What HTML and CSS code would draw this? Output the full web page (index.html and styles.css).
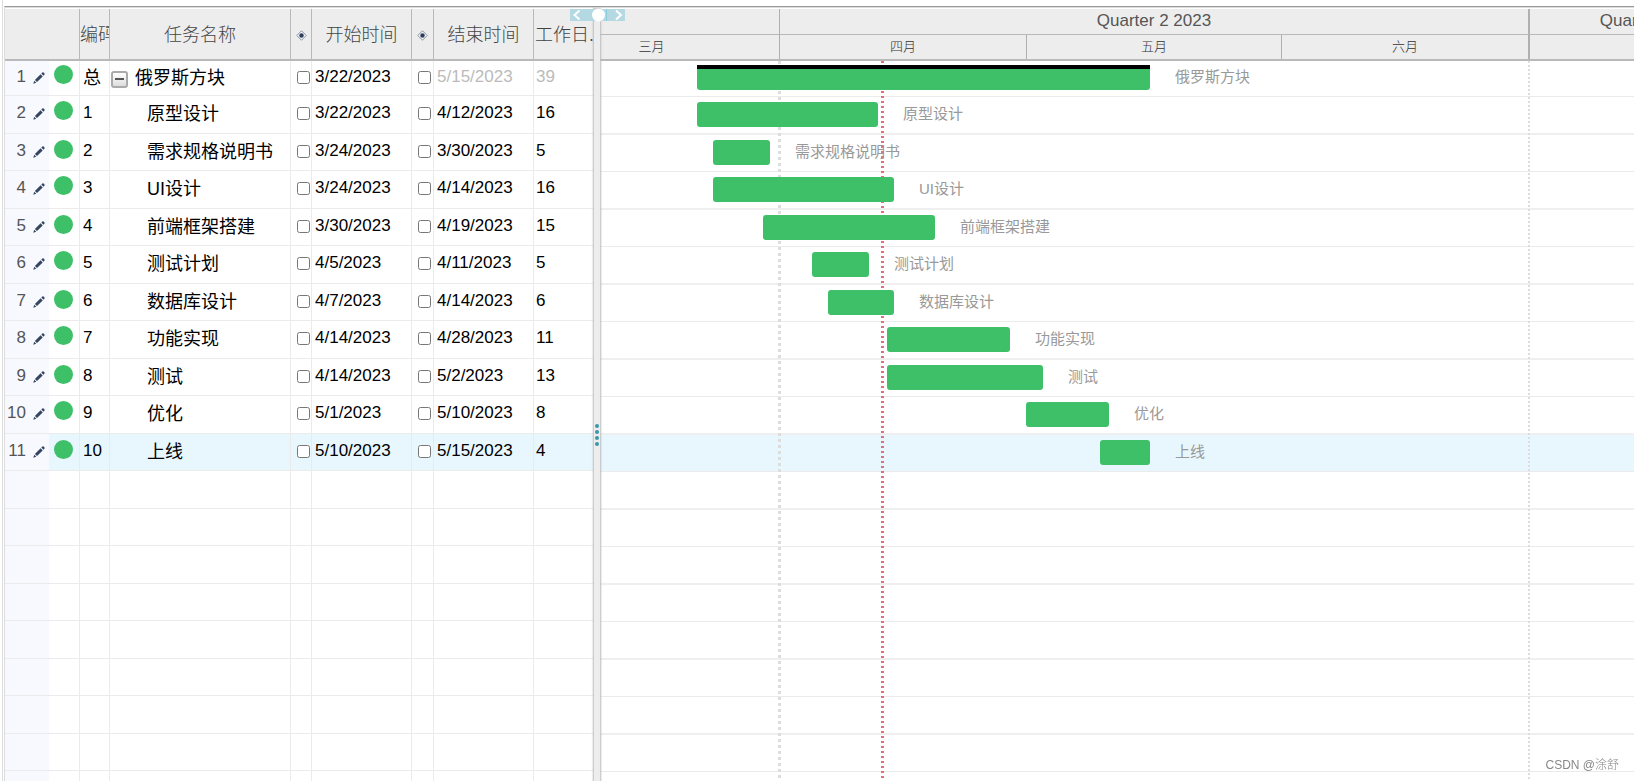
FILE: index.html
```html
<!DOCTYPE html>
<html lang="zh-CN">
<head>
<meta charset="utf-8">
<title>俄罗斯方块</title>
<link rel="stylesheet" href="styles.css">
</head>
<body>
<svg class="symbols" aria-hidden="true">
  <symbol id="pencil" viewBox="0 0 12 12"><path d="M0.3 11.7 1.2 8.7 3.3 10.8ZM1.9 8 7.6 2.3 9.7 4.4 4 10.1ZM8.3 1.6 9.4 0.5Q10 0 10.6 0.5L11.5 1.4Q12 2 11.5 2.6L10.4 3.7Z" fill="#34455f"/></symbol>
  <symbol id="diamond" viewBox="0 0 11 11"><path d="M5.5 0.8 10.2 5.5 5.5 10.2 0.8 5.5Z" fill="#f4f6f9" stroke="#8791a0"/><circle cx="5.5" cy="5.5" r="2.2" fill="#2d3e58"/></symbol>
</svg>
<main class="gantt">
  <section class="sheet">
    <table class="grid">
      <colgroup><col class="c-num"><col class="c-dot"><col class="c-code"><col class="c-name"><col class="c-lock"><col class="c-date"><col class="c-lock2"><col class="c-date"><col class="c-days"></colgroup>
      <thead>
        <tr><th class="plain"></th><th></th><th class="cut">编码</th><th>任务名称</th><th><svg class="diamond"><use href="#diamond"/></svg></th><th>开始时间</th><th><svg class="diamond"><use href="#diamond"/></svg></th><th>结束时间</th><th class="cut last">工作日...</th></tr>
      </thead>
      <tbody>
        <tr><td class="num"><span>1</span><svg class="pencil"><use href="#pencil"/></svg></td><td><i class="dot"></i></td><td class="cjk">总</td><td class="name root"><button class="toggle" type="button" aria-label="折叠"></button>俄罗斯方块</td><td class="lock"><input type="checkbox" aria-label="锁定开始时间"></td><td>3/22/2023</td><td class="lock"><input type="checkbox" aria-label="锁定结束时间"></td><td class="muted">5/15/2023</td><td class="muted">39</td></tr>
        <tr><td class="num"><span>2</span><svg class="pencil"><use href="#pencil"/></svg></td><td><i class="dot"></i></td><td>1</td><td class="name">原型设计</td><td class="lock"><input type="checkbox" aria-label="锁定开始时间"></td><td>3/22/2023</td><td class="lock"><input type="checkbox" aria-label="锁定结束时间"></td><td>4/12/2023</td><td>16</td></tr>
        <tr><td class="num"><span>3</span><svg class="pencil"><use href="#pencil"/></svg></td><td><i class="dot"></i></td><td>2</td><td class="name">需求规格说明书</td><td class="lock"><input type="checkbox" aria-label="锁定开始时间"></td><td>3/24/2023</td><td class="lock"><input type="checkbox" aria-label="锁定结束时间"></td><td>3/30/2023</td><td>5</td></tr>
        <tr><td class="num"><span>4</span><svg class="pencil"><use href="#pencil"/></svg></td><td><i class="dot"></i></td><td>3</td><td class="name">UI设计</td><td class="lock"><input type="checkbox" aria-label="锁定开始时间"></td><td>3/24/2023</td><td class="lock"><input type="checkbox" aria-label="锁定结束时间"></td><td>4/14/2023</td><td>16</td></tr>
        <tr><td class="num"><span>5</span><svg class="pencil"><use href="#pencil"/></svg></td><td><i class="dot"></i></td><td>4</td><td class="name">前端框架搭建</td><td class="lock"><input type="checkbox" aria-label="锁定开始时间"></td><td>3/30/2023</td><td class="lock"><input type="checkbox" aria-label="锁定结束时间"></td><td>4/19/2023</td><td>15</td></tr>
        <tr><td class="num"><span>6</span><svg class="pencil"><use href="#pencil"/></svg></td><td><i class="dot"></i></td><td>5</td><td class="name">测试计划</td><td class="lock"><input type="checkbox" aria-label="锁定开始时间"></td><td>4/5/2023</td><td class="lock"><input type="checkbox" aria-label="锁定结束时间"></td><td>4/11/2023</td><td>5</td></tr>
        <tr><td class="num"><span>7</span><svg class="pencil"><use href="#pencil"/></svg></td><td><i class="dot"></i></td><td>6</td><td class="name">数据库设计</td><td class="lock"><input type="checkbox" aria-label="锁定开始时间"></td><td>4/7/2023</td><td class="lock"><input type="checkbox" aria-label="锁定结束时间"></td><td>4/14/2023</td><td>6</td></tr>
        <tr><td class="num"><span>8</span><svg class="pencil"><use href="#pencil"/></svg></td><td><i class="dot"></i></td><td>7</td><td class="name">功能实现</td><td class="lock"><input type="checkbox" aria-label="锁定开始时间"></td><td>4/14/2023</td><td class="lock"><input type="checkbox" aria-label="锁定结束时间"></td><td>4/28/2023</td><td>11</td></tr>
        <tr><td class="num"><span>9</span><svg class="pencil"><use href="#pencil"/></svg></td><td><i class="dot"></i></td><td>8</td><td class="name">测试</td><td class="lock"><input type="checkbox" aria-label="锁定开始时间"></td><td>4/14/2023</td><td class="lock"><input type="checkbox" aria-label="锁定结束时间"></td><td>5/2/2023</td><td>13</td></tr>
        <tr><td class="num"><span>10</span><svg class="pencil"><use href="#pencil"/></svg></td><td><i class="dot"></i></td><td>9</td><td class="name">优化</td><td class="lock"><input type="checkbox" aria-label="锁定开始时间"></td><td>5/1/2023</td><td class="lock"><input type="checkbox" aria-label="锁定结束时间"></td><td>5/10/2023</td><td>8</td></tr>
        <tr class="active"><td class="num"><span>11</span><svg class="pencil"><use href="#pencil"/></svg></td><td><i class="dot"></i></td><td>10</td><td class="name">上线</td><td class="lock"><input type="checkbox" aria-label="锁定开始时间"></td><td>5/10/2023</td><td class="lock"><input type="checkbox" aria-label="锁定结束时间"></td><td>5/15/2023</td><td>4</td></tr>
        <tr><td class="num"></td><td></td><td></td><td></td><td></td><td></td><td></td><td></td><td></td></tr>
        <tr><td class="num"></td><td></td><td></td><td></td><td></td><td></td><td></td><td></td><td></td></tr>
        <tr><td class="num"></td><td></td><td></td><td></td><td></td><td></td><td></td><td></td><td></td></tr>
        <tr><td class="num"></td><td></td><td></td><td></td><td></td><td></td><td></td><td></td><td></td></tr>
        <tr><td class="num"></td><td></td><td></td><td></td><td></td><td></td><td></td><td></td><td></td></tr>
        <tr><td class="num"></td><td></td><td></td><td></td><td></td><td></td><td></td><td></td><td></td></tr>
        <tr><td class="num"></td><td></td><td></td><td></td><td></td><td></td><td></td><td></td><td></td></tr>
        <tr><td class="num"></td><td></td><td></td><td></td><td></td><td></td><td></td><td></td><td></td></tr>
        <tr><td class="num"></td><td></td><td></td><td></td><td></td><td></td><td></td><td></td><td></td></tr>
      </tbody>
    </table>
  </section>

  <div class="splitter">
    <svg class="handle" viewBox="0 0 55 12"><rect width="55" height="12" fill="#b4d9e3"/><path d="M36.5 0V12" stroke="#8accdc"/><path d="M9.5 1.5 4.5 6 9.5 10.5M46 1.5 51 6 46 10.5" fill="none" stroke="#fff" stroke-width="2"/><circle cx="28.5" cy="6" r="6.5" fill="#fff"/></svg>
    <div class="grip"><i></i><i></i><i></i><i></i></div>
  </div>

  <section class="chart">
    <header class="scale">
      <div class="tier quarters"><span class="march"></span><span class="quarter">Quarter 2 2023</span><span class="july next">Quarter 3 2023</span></div>
      <div class="tier months"><span class="march">三月</span><span class="short">四月</span><span class="long">五月</span><span class="short">六月</span><span class="july next"></span></div>
    </header>
    <div class="lanes">
      <i class="line month-line"></i><i class="line quarter-line"></i><i class="line today-line"></i>
      <div class="lane"><i class="bar summary" style="margin-left:97px;width:453px"></i><span>俄罗斯方块</span></div>
      <div class="lane"><i class="bar" style="margin-left:97px;width:181px"></i><span>原型设计</span></div>
      <div class="lane"><i class="bar" style="margin-left:113px;width:57px"></i><span>需求规格说明书</span></div>
      <div class="lane"><i class="bar" style="margin-left:113px;width:181px"></i><span>UI设计</span></div>
      <div class="lane"><i class="bar" style="margin-left:163px;width:172px"></i><span>前端框架搭建</span></div>
      <div class="lane"><i class="bar" style="margin-left:212px;width:57px"></i><span>测试计划</span></div>
      <div class="lane"><i class="bar" style="margin-left:228px;width:66px"></i><span>数据库设计</span></div>
      <div class="lane"><i class="bar" style="margin-left:287px;width:123px"></i><span>功能实现</span></div>
      <div class="lane"><i class="bar" style="margin-left:287px;width:156px"></i><span>测试</span></div>
      <div class="lane"><i class="bar" style="margin-left:426px;width:83px"></i><span>优化</span></div>
      <div class="lane active"><i class="bar" style="margin-left:500px;width:50px"></i><span>上线</span></div>
      <div class="lane"></div><div class="lane"></div><div class="lane"></div><div class="lane"></div><div class="lane"></div><div class="lane"></div><div class="lane"></div><div class="lane"></div><div class="lane"></div>
    </div>
  </section>
</main>
<div class="credit">CSDN @涂舒</div>
</body>
</html>
```
FILE: styles.css
```css
* { box-sizing: border-box; }

body {
  margin: 0 0 0 2px;
  height: 100vh;
  padding: 6px 0 0 1px;
  border-left: 1px solid #ddd;
  overflow: hidden;
  background: #fff;
  color: #000;
  font-family: "Liberation Sans", "Noto Sans CJK SC", sans-serif;
  font-size: 17px;
}

.symbols { display: none; }

.gantt {
  display: flex;
  height: 100%;
  padding-top: 1px;
  border-top: 1px solid #999;
  border-left: 1px solid #ddd;
  box-shadow: inset 0 1px #ddd;
  overflow: hidden;
}

/* task sheet */
.sheet { flex: none; width: 589px; padding-top: 1px; overflow: hidden; }

.grid { width: 100%; table-layout: fixed; border-collapse: separate; border-spacing: 0; }
.c-num { width: 44px; }
.c-dot { width: 31px; }
.c-code { width: 30px; }
.c-name { width: 181px; }
.c-lock { width: 21px; }
.c-lock2 { width: 22px; }
.c-date { width: 100px; }
.c-days { width: 60px; }

th {
  height: 52px;
  padding: 2px 0 0;
  background: #ededed;
  border-right: 1px solid #b9b9b9;
  border-bottom: 2px solid #b9b9b9;
  color: #444;
  font-size: 18px;
  font-weight: 300;
  line-height: 24px;
  white-space: nowrap;
  overflow: hidden;
}
th.plain, th.last { border-right: 0; }
th.cut { text-align: left; }
th.last { padding-left: 1px; }
.diamond { display: block; width: 11px; height: 11px; margin: 0 auto; }

td {
  height: 37px;
  padding: 0 0 2px 3px;
  border-right: 1px solid #ebebeb;
  border-bottom: 1px solid #ebebeb;
  line-height: 24px;
  white-space: nowrap;
  overflow: hidden;
}
tbody tr:nth-child(even) td { height: 38px; padding-bottom: 4px; }
tbody tr:first-child td { height: 35px; padding-bottom: 3px; }
td:last-child { padding-left: 2px; border-right: 0; }
.active td { background: #e8f7fe; }

td.num, .active td.num {
  padding-left: 0;
  background: #f7f9ff;
  border-right: 0;
  color: #555;
}
.num span { display: inline-block; width: 21px; text-align: right; }
.pencil { width: 12px; height: 12px; margin-left: 7px; vertical-align: -2px; }

.dot { display: block; width: 19px; height: 19px; margin: 0 0 4px 2px; border-radius: 50%; background: #3dc068; }
tbody tr td.name, tbody tr td.cjk { font-size: 18px; padding-bottom: 1px; }
td.name { padding-left: 37px; }
td.root { padding-left: 1px; }
.muted { color: #bbb; }

.toggle {
  display: inline-block;
  width: 17px;
  height: 17px;
  margin: 0 7px 0 0;
  padding: 0;
  vertical-align: -2px;
  border: 2px solid #aaa;
  border-radius: 3px;
  background: linear-gradient(#555, #555) center / 9px 2px no-repeat, linear-gradient(#fff, #ddd);
}

tbody tr td.lock { padding: 0 0 2px; }
.lock input { display: block; width: 13px; height: 13px; margin: 0 0 0 6px; }

/* splitter */
.splitter {
  position: relative;
  z-index: 2;
  flex: none;
  width: 6px;
  margin-top: 1px;
  background: #ededed;
  box-shadow: 0 0 2px 1px #bbb;
}
.handle { position: absolute; top: 0; left: -24px; width: 55px; height: 12px; overflow: visible; }
.grip {
  position: absolute;
  top: 0;
  bottom: 0;
  left: 1px;
  display: grid;
  align-content: center;
  gap: 2px;
  padding-top: 80px;
}
.grip i { width: 4px; height: 4px; border-radius: 50%; background: #3a97a9; }

/* timeline */
.chart { flex: 1; min-width: 0; padding-top: 1px; overflow: hidden; }
.scale { border-bottom: 2px solid #b9b9b9; background: #ededed; color: #555; overflow: hidden; }
.tier { display: flex; height: 25px; margin-left: -77px; line-height: 24px; text-align: center; }
.tier span { flex: none; border-left: 1px solid #b0b0b0; }
.tier .next { border-left: 2px solid #b0b0b0; }
.quarters { height: 26px; }
.quarters span { border-bottom: 1px solid #b9b9b9; }
.months { height: 24px; color: #333; font-size: 13px; font-weight: 300; }
.march, .july { width: 256px; }
.quarter { width: 749px; }
.short { width: 247px; }
.long { width: 255px; }

.lanes { position: relative; }
.lane { display: flex; height: 37px; padding-top: 5px; border-bottom: 1px solid #ebebeb; }
.lane:nth-of-type(even) { height: 38px; border-bottom: 2px solid #efefef; }
.lane:first-of-type { height: 36px; padding-top: 4px; }
.lane.active { background: #e8f7fe; }
.bar { position: relative; flex: none; height: 25px; border-radius: 3px; background: #3dc068; }
.summary { border-top: 4px solid #000; border-radius: 0 0 3px 3px; }
.lane span { position: relative; margin-left: 25px; color: #999; font-size: 15px; line-height: 23px; }

.line { position: absolute; top: 0; bottom: 0; }
.month-line { left: 178px; width: 3px; background: repeating-linear-gradient(#ddd 0 3px, transparent 3px 6px); }
.quarter-line { left: 928px; width: 2px; background: repeating-linear-gradient(#ddd 0 2px, transparent 2px 4px); }
.today-line { left: 281px; width: 3px; background: repeating-linear-gradient(#e0707c 0 2px, transparent 2px 5px); }

.credit { position: fixed; right: 15px; bottom: 7px; color: #888; font-size: 12px; font-weight: 300; line-height: 18px; }
```
